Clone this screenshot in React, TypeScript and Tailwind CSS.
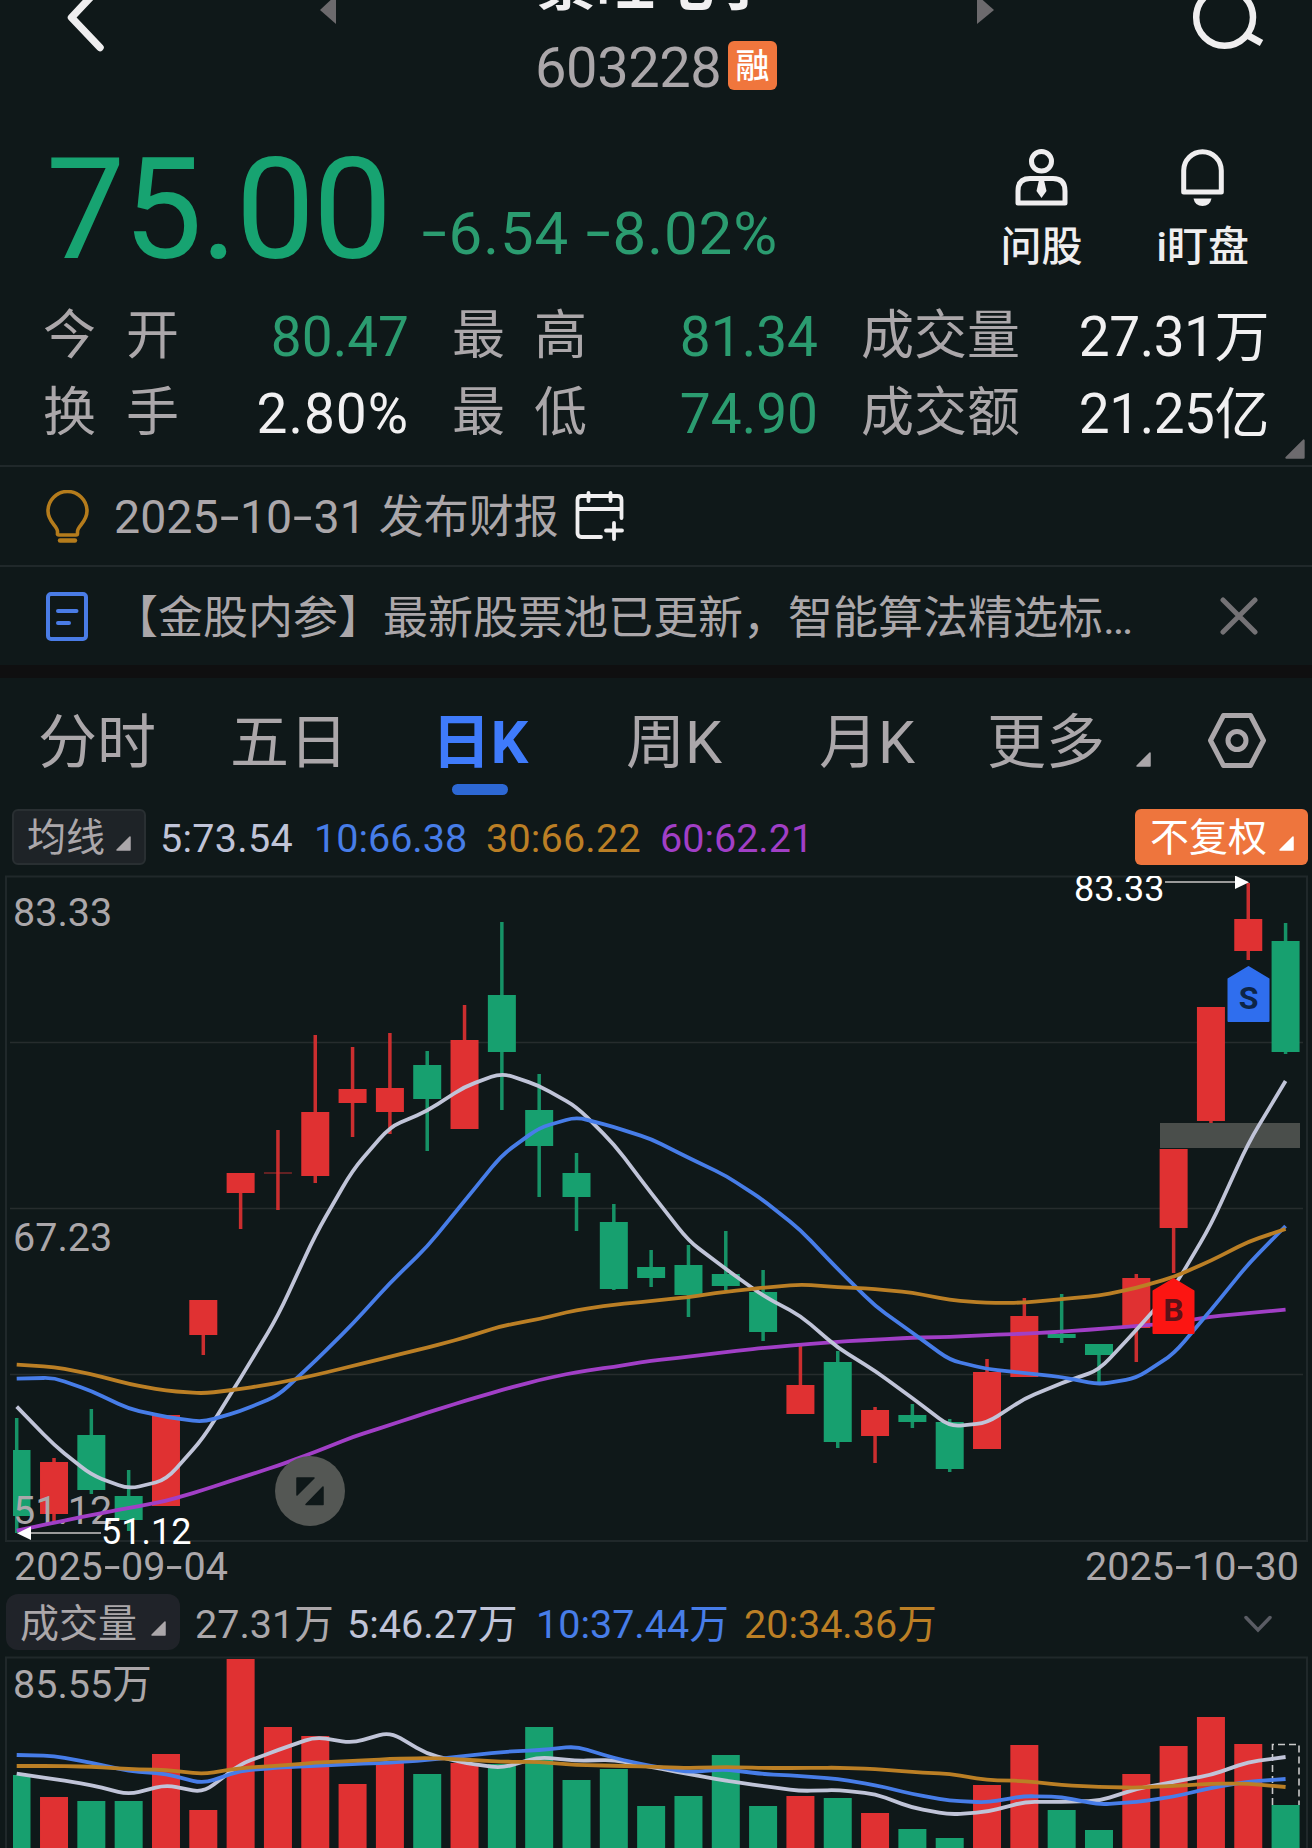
import type { ReactNode } from "react";

const UP = "#e03132";
const DOWN = "#17a06f";

// Horizontal centre of the n-th trading day
const cx = (i: number) => 16.7 + i * 37.32;

// [direction, body top, body bottom, wick top, wick bottom]
type Candle = [number, number, number, number, number];

const candles: Candle[] = [
  [0, 1450, 1516, 1418, 1533],
  [1, 1462, 1514, 1458, 1522],
  [0, 1435, 1490, 1409, 1494],
  [0, 1496, 1520, 1470, 1531],
  [1, 1415, 1506, 1415, 1506],
  [1, 1300, 1335, 1300, 1355],
  [1, 1173, 1193, 1173, 1229],
  [1, 1172, 1174, 1130, 1210],
  [1, 1112, 1176, 1035, 1183],
  [1, 1089, 1103, 1047, 1137],
  [1, 1088, 1112, 1033, 1134],
  [0, 1065, 1099, 1051, 1151],
  [1, 1040, 1129, 1005, 1129],
  [0, 995, 1052, 922, 1110],
  [0, 1110, 1146, 1074, 1197],
  [0, 1173, 1197, 1153, 1231],
  [0, 1222, 1289, 1204, 1290],
  [0, 1267, 1278, 1250, 1287],
  [0, 1265, 1295, 1245, 1317],
  [0, 1274, 1286, 1231, 1290],
  [0, 1292, 1332, 1270, 1341],
  [1, 1385, 1414, 1346, 1414],
  [0, 1362, 1442, 1351, 1448],
  [1, 1410, 1436, 1407, 1463],
  [0, 1415, 1422, 1404, 1428],
  [0, 1422, 1469, 1419, 1472],
  [1, 1372, 1449, 1359, 1449],
  [1, 1316, 1377, 1298, 1377],
  [0, 1334, 1338, 1294, 1343],
  [0, 1344, 1355, 1344, 1383],
  [1, 1278, 1328, 1274, 1362],
  [1, 1149, 1228, 1149, 1273],
  [1, 1007, 1121, 1007, 1124],
  [1, 919, 951, 883, 960],
  [0, 941, 1052, 923, 1054],
];

const priceLines = [
  {
    color: "#a13fc6",
    ys: [1530.7, 1522.7, 1515, 1508, 1501, 1490, 1477.7, 1465.7, 1452, 1437, 1425, 1412.7, 1401, 1390, 1380, 1372, 1366.7, 1360.7, 1356.7, 1352, 1348, 1344.7, 1341.7, 1339.7, 1337.7, 1337, 1335, 1333.7, 1331.7, 1329, 1326, 1323, 1316.7, 1313, 1309.7],
  },
  {
    color: "#c0c4d8",
    ys: [1406.7, 1445, 1475, 1489, 1480, 1438, 1378, 1316, 1235, 1170, 1127, 1111, 1086.7, 1073, 1085.7, 1106.7, 1144, 1193, 1240.7, 1269, 1295.7, 1315.7, 1347.7, 1371, 1398, 1426.5, 1423, 1398.7, 1383, 1370, 1330, 1288, 1225, 1143, 1081],
  },
  {
    color: "#477de8",
    ys: [1378.7, 1377.7, 1391, 1408.7, 1417, 1422, 1411, 1395.7, 1361, 1324, 1283, 1246.7, 1201, 1155, 1127.7, 1117, 1127, 1139, 1157.7, 1175.7, 1200, 1230, 1269, 1306, 1332.7, 1360, 1369, 1373, 1377, 1384.5, 1378, 1354, 1310, 1264, 1226],
  },
  {
    color: "#bb7f25",
    ys: [1364.7, 1367, 1374, 1384, 1390.7, 1393.5, 1389, 1383, 1375, 1366, 1356.7, 1347.7, 1337.7, 1326, 1319, 1310, 1304.7, 1301, 1297, 1291.7, 1287.7, 1284.5, 1287, 1289, 1292.7, 1300, 1303, 1302.7, 1299, 1295.7, 1288, 1277, 1260.7, 1241.7, 1229],
  },
];

const volumeTops = [1775, 1797, 1801, 1801, 1754, 1810, 1659, 1727, 1736, 1784, 1763, 1774, 1763, 1764, 1727, 1780, 1769, 1806, 1796, 1755, 1806, 1796, 1798, 1813, 1829, 1838, 1785, 1745, 1810, 1830, 1774, 1746, 1717, 1744, 1805];

const volumeLines = [
  {
    color: "#c0c4d8",
    ys: [1773.7, 1779, 1785, 1794.5, 1785, 1792.5, 1764, 1750, 1737, 1743, 1732, 1754, 1763, 1768, 1757, 1760.7, 1760, 1767, 1774, 1780.7, 1786, 1791, 1790, 1794, 1807.7, 1814.5, 1812, 1802, 1801.7, 1801, 1789, 1781.7, 1775, 1762, 1757],
  },
  {
    color: "#477de8",
    ys: [1755, 1756, 1762.7, 1771, 1774, 1783.5, 1770.7, 1767.7, 1766, 1764, 1762.7, 1760, 1756, 1752, 1750, 1746.5, 1758, 1766, 1772, 1769.5, 1774, 1776, 1779, 1785, 1794, 1800.7, 1802.5, 1796, 1797, 1804.5, 1802, 1796.7, 1788, 1781.7, 1779],
  },
  {
    color: "#bb7f25",
    ys: [1766, 1766, 1766.7, 1769, 1770, 1774, 1768, 1765.7, 1762.7, 1761, 1759, 1758, 1759.7, 1761.7, 1762, 1765, 1765.7, 1766.7, 1768, 1767, 1768, 1768, 1767.7, 1769, 1772, 1774, 1780, 1781, 1785, 1787, 1787.7, 1786, 1783.7, 1783.7, 1787],
  },
];

// Joins the points with straight segments and slightly rounded corners
function linePath(ys: number[]) {
  const r = 0.28;
  let d = `M${cx(0)} ${ys[0]}`;
  for (let i = 1; i < ys.length - 1; i++) {
    const x = cx(i);
    const y = ys[i];
    const x1 = x + (cx(i - 1) - x) * r;
    const y1 = y + (ys[i - 1] - y) * r;
    const x2 = x + (cx(i + 1) - x) * r;
    const y2 = y + (ys[i + 1] - y) * r;
    d += `L${x1} ${y1}Q${x} ${y} ${x2} ${y2}`;
  }
  return d + `L${cx(ys.length - 1)} ${ys[ys.length - 1]}`;
}

function Dash() {
  return (
    <span className="inline-block w-[0.46em] -translate-y-[0.03em] scale-x-150 text-center">-</span>
  );
}

function Corner({ className = "", size = 15 }: { className?: string; size?: number }) {
  return (
    <svg width={size} height={size} viewBox="0 0 15 15" className={className}>
      <path d="M14 1v13H1z" fill="currentColor" stroke="currentColor" strokeWidth="1.5" strokeLinejoin="round" />
    </svg>
  );
}

function Header() {
  return (
    <header className="flex h-[110px] items-start overflow-hidden">
      <svg width="50" height="60" viewBox="60 0 50 60" fill="none" className="ml-[60px]">
        <path d="M103 -16L71.5 17.5L100 47.5" stroke="#efeeef" strokeWidth="7.5" strokeLinecap="round" strokeLinejoin="round" />
      </svg>
      <svg width="16" height="24" viewBox="0 0 16 24" className="ml-[210px]">
        <path d="M16 -5v29L0 10z" fill="#6c6a6d" />
      </svg>
      <div className="ml-[197px] w-[244px]">
        <h1 className="-mt-[45px] pl-[4px] text-[59px] leading-[60px] font-bold whitespace-nowrap text-[#f1f0f1]">
          景旺电子
        </h1>
        <div className="mt-[28px] flex h-[50px] items-center whitespace-nowrap">
          <span className="w-[195px] pl-[2px] text-[56px] leading-[50px] tracking-[-0.4px] text-[#aba7aa]">603228</span>
          <span className="-mt-[5px] flex size-[49px] items-center justify-center rounded-md bg-[#f0763d] text-[34px] leading-[46px] font-medium text-white">
            融
          </span>
        </div>
      </div>
      <svg width="17" height="24" viewBox="0 0 17 24" className="ml-[200px]">
        <path d="M0 -5v29L17 10z" fill="#6c6a6d" />
      </svg>
      <svg width="76" height="56" viewBox="1190 0 76 56" fill="none" className="ml-[196px]" stroke="#efeeef" strokeWidth="6.5">
        <circle cx="1224.6" cy="17.3" r="28.4" />
        <path d="M1247 35L1261.500 43" strokeWidth="7" />
      </svg>
    </header>
  );
}

function Price() {
  return (
    <section className="flex h-[180px] items-start whitespace-nowrap">
      <div className="mt-[30px] ml-[46px] w-[354px] text-[141px] leading-[140px] tracking-[-2px] text-[#17a371]">75.00</div>
      <div className="mt-[94px] ml-[21px] text-[60px] leading-[60px] tracking-[0.9px] text-[#2b9c70]">
        <Dash />
        6.54 <Dash />
        8.02%
      </div>
      <div className="mt-[39px] mr-[63px] ml-auto flex gap-[74px] text-[41px] leading-[40px] font-medium text-[#efeeef]">
        <div className="flex flex-col items-center">
          <svg width="53" height="57" viewBox="0 0 53 57" fill="none" stroke="currentColor" strokeWidth="5">
            <ellipse cx="26.5" cy="12.3" rx="10" ry="9.8" />
            <path d="M3 54V42Q3 29.5 15 29.5H38Q50 29.5 50 42V54Z" strokeLinejoin="round" />
            <path d="M24 31h5l2.5 11l-5 7l-5 -7z" fill="currentColor" stroke="none" />
          </svg>
          <span className="mt-[21px]">问股</span>
        </div>
        <div className="flex flex-col items-center">
          <svg width="43" height="57" viewBox="0 0 43 57" fill="none" stroke="currentColor" strokeWidth="5">
            <path d="M2.7 43V21.5A18.8 18.8 0 0 1 40.3 21.5V43Z" strokeLinejoin="round" />
            <path d="M12.5 49.5h18q-1.5 7.5 -9 7.5t-9 -7.5z" fill="currentColor" stroke="none" />
          </svg>
          <span className="mt-[21px]">i盯盘</span>
        </div>
      </div>
    </section>
  );
}

const stats = [
  [
    { label: "今开", value: "80.47", tone: "text-[#2b9c70]" },
    { label: "最高", value: "81.34", tone: "text-[#2b9c70]" },
    { label: "成交量", value: "27.31万", tone: "tracking-[-0.5px] text-[#f1f0f1]" },
  ],
  [
    { label: "换手", value: "2.80%", tone: "tracking-[1px] text-[#f1f0f1]" },
    { label: "最低", value: "74.90", tone: "text-[#2b9c70]" },
    { label: "成交额", value: "21.25亿", tone: "tracking-[-0.5px] text-[#f1f0f1]" },
  ],
];

const labelWidths = ["w-[136px]", "w-[135px]", "w-[159px]"];
const valueWidths = ["w-[230px] mr-px", "w-[231px] mr-px", "w-[249px]"];

function Stats() {
  return (
    <section className="relative h-[177px] border-b-2 border-[#20282a] pt-[8px] pl-[43px] whitespace-nowrap">
      {stats.map((row, r) => (
        <div key={r} className="flex h-[77px] gap-[42px] leading-[77px]">
          {row.map((item, i) => (
            <div key={item.label} className="flex">
              <div className={`flex justify-between text-[53px] text-[#aba7aa] ${labelWidths[i]}`}>
                {item.label.split("").map((c) => (
                  <span key={c}>{c}</span>
                ))}
              </div>
              <div className={`pt-px text-right text-[55px] ${valueWidths[i]} ${item.tone}`}>{item.value}</div>
            </div>
          ))}
        </div>
      ))}
      <Corner size={20} className="absolute right-[7px] bottom-[6px] text-[#6d6b6e]" />
    </section>
  );
}

function Notices() {
  return (
    <section className="whitespace-nowrap text-[#aba7aa]">
      <div className="flex h-[100px] items-center border-b-2 border-[#20282a] pl-[46px]">
        <svg width="43" height="53" viewBox="0 0 43 53" fill="none" stroke="#b57c1c" strokeWidth="3.6">
          <path d="M11.5 45V41.5C11.5 36 2 32 2 21A19.5 19.5 0 0 1 41 21C41 32 31.5 36 31.5 41.5V43.5Q31.5 45 30 45H13Q11.5 45 11.5 43.5Z" />
          <path d="M14 50.5H29" strokeWidth="4.4" strokeLinecap="round" />
        </svg>
        <div className="mt-[2px] ml-[25px] text-[46.5px] leading-[60px]">
          2025
          <Dash />
          10
          <Dash />
          31
        </div>
        <div className="mt-[3px] ml-[13px] text-[45px] leading-[60px]">发布财报</div>
        <svg width="49" height="50" viewBox="0 0 49 50" fill="none" stroke="#f0eff0" strokeWidth="3.8" strokeLinecap="round" className="ml-[16px]">
          <path d="M26 46H6.5Q2.500 46 2.500 42V9Q2.500 5 6.5 5H42.5Q46.5 5 46.5 9V27M2.500 18H46.5M13.5 1.900V10M35.5 1.900V10" />
          <path d="M39 32V48M31 39.5H47" />
        </svg>
      </div>
      <div className="flex h-[98px] items-center pl-[46px]">
        <svg width="42" height="49" viewBox="0 0 42 49" fill="none" stroke="#4a7ce6" strokeWidth="4">
          <rect x="2" y="2" width="38" height="45" rx="3" />
          <path d="M12 19H30.5M12 31H23" strokeLinecap="round" />
        </svg>
        <div className="mt-[6px] ml-[25px] text-[45px] leading-[60px]">
          【金股内参】最新股票池已更新，智能算法精选标…
        </div>
        <svg width="38" height="38" viewBox="0 0 38 38" className="mr-[54px] ml-auto" stroke="#747275" strokeWidth="5" strokeLinecap="round">
          <path d="M3 3L35 35M35 3L3 35" />
        </svg>
      </div>
      <div className="h-[13px] bg-[#0f0f10]" />
    </section>
  );
}

const tabs = [
  { name: "分时", width: "w-[192px]" },
  { name: "五日", width: "w-[200px]" },
  { name: "日K", width: "w-[196px]", active: true },
  { name: "周K", width: "w-[193px]" },
  { name: "月K", width: "w-[168px]" },
  { name: "更多", width: "w-[149px]" },
];

function Tabs() {
  return (
    <nav className="flex h-[122px] items-start pt-[35px] pl-[38px] text-[59px] leading-[60px] whitespace-nowrap text-[#aba7aa]">
      {tabs.map((tab) => (
        <div key={tab.name} className={tab.width}>
          {tab.active ? (
            <div className="flex w-[100px] flex-col items-center font-bold text-[#3f7bfb]">
              {tab.name}
              <span className="mt-[11px] h-[11px] w-[56px] rounded-full bg-[#2d68d4]" />
            </div>
          ) : (
            tab.name
          )}
        </div>
      ))}
      <Corner className="mt-[39px]" />
      <svg width="60" height="56" viewBox="0 1 60 56" fill="none" stroke="currentColor" strokeWidth="5" className="ml-[56px]">
        <path d="M16.5 3.500H43.5L56.5 28.5L43.5 53.5H16.5L3.500 28.5Z" strokeLinejoin="round" />
        <circle cx="30" cy="28.5" r="9" />
      </svg>
    </nav>
  );
}

function Averages() {
  return (
    <div className="flex h-[70px] items-start pt-[9px] text-[39.5px] leading-[60px] whitespace-nowrap">
      <div className="ml-[12px] flex h-[56px] w-[134px] items-start rounded-md border-2 border-[#292f32] bg-[#1e2327] pl-[13px] text-[39px] leading-[55px] text-[#aba7aa]">
        均线
        <Corner className="mt-[25px] ml-[11px]" />
      </div>
      <span className="ml-[14px] w-[154px] tracking-[0.3px] text-[#c0c4d8]">5:73.54</span>
      <span className="w-[172px] text-[#477de8]">10:66.38</span>
      <span className="w-[174px] tracking-[0.2px] text-[#bb7f25]">30:66.22</span>
      <span className="text-[#a13fc6]">60:62.21</span>
      <div className="mr-[4px] ml-auto flex h-[56px] w-[173px] items-start rounded-md bg-[#ee753d] pl-[15px] text-[39px] leading-[58px] text-white">
        不复权
        <Corner className="mt-[27px] ml-[12px]" />
      </div>
    </div>
  );
}

function Marker({ x, y, fill, ink, children }: { x: number; y: number; fill: string; ink: string; children: ReactNode }) {
  return (
    <g>
      <path
        d={`M${x} ${y}L${x + 20} ${y + 12}V${y + 54}H${x - 20}V${y + 12}Z`}
        fill={fill}
        stroke={fill}
        strokeWidth="2"
        strokeLinejoin="round"
      />
      <text x={x} y={y + 42} textAnchor="middle" fontSize="32" fontWeight="700" fill={ink}>
        {children}
      </text>
    </g>
  );
}

function PriceChart() {
  return (
    <svg width="1312" height="680" viewBox="0 870 1312 680" className="block" fill="none">
      <rect x="6" y="876.5" width="1301" height="664.5" stroke="#20282a" strokeWidth="2" />
      <path d="M10 1042.5H1303M10 1208.5H1303M10 1374.5H1303" stroke="#262c2d" strokeWidth="1.5" />

      {candles.map(([up, top, bottom, high, low], i) => {
        const color = up ? UP : DOWN;
        const x = i === 0 ? 13 : cx(i) - 14;
        const w = i === 0 ? 17.5 : 28;
        return (
          <g key={i} fill={color}>
            <rect x={cx(i) - 1.75} y={high} width="3.5" height={low - high} opacity="0.9" />
            <rect x={x} y={top} width={w} height={bottom - top} opacity={bottom - top < 3 ? 0.4 : 1} />
          </g>
        );
      })}

      <rect x="1160" y="1123" width="140" height="25" fill="#4a4e4b" />

      <g fontSize="39.5" fill="#aba7aa">
        <text x="13" y="926">83.33</text>
        <text x="13" y="1250.5">67.23</text>
        <text x="13" y="1524">51.12</text>
      </g>

      {priceLines.map((line) => (
        <path key={line.color} d={linePath(line.ys)} stroke={line.color} strokeWidth="3.8" strokeLinejoin="round" />
      ))}

      {/* Highest and lowest price callouts */}
      <clipPath id="plot">
        <rect x="0" y="876" width="1312" height="680" />
      </clipPath>
      <g clipPath="url(#plot)" fill="#fff">
        <text x="1074" y="901" fontSize="36">83.33</text>
        <path d="M1165 882H1236" stroke="#9a9a9a" strokeWidth="2" />
        <path d="M1235 875.5V889L1249 882.3Z" />
        <text x="101" y="1544" fontSize="36">51.12</text>
        <path d="M30 1533H101" stroke="#9a9a9a" strokeWidth="2" />
        <path d="M31 1526.5V1540L17 1533.3Z" />
      </g>

      <Marker x={1248.5} y={967} fill="#2f6eee" ink="#0d2547">S</Marker>
      <Marker x={1173.5} y={1279} fill="#fc1512" ink="#5a1218">B</Marker>

      <circle cx="310" cy="1491" r="35" fill="#545754" />
      <path d="M297 1478H314L297 1495ZM323 1487V1504.5H306Z" fill="#0f1819" stroke="#0f1819" strokeWidth="1.5" strokeLinejoin="round" />
    </svg>
  );
}

function VolumeBar() {
  return (
    <div className="flex h-[70px] items-start pt-[10px] text-[39.5px] leading-[62px] whitespace-nowrap">
      <div className="ml-[6px] flex h-[56px] w-[174px] items-start rounded-xl bg-[#202329] pl-[14px] text-[39px] leading-[61px] text-[#aba7aa]">
        成交量
        <Corner className="mt-[27px] ml-[14px]" />
      </div>
      <span className="ml-[15px] w-[152px] text-[#aba7aa]">27.31万</span>
      <span className="w-[189px] text-[#c0c4d8]">5:46.27万</span>
      <span className="w-[208px] text-[#477de8]">10:37.44万</span>
      <span className="text-[#bb7f25]">20:34.36万</span>
      <svg width="28" height="18" viewBox="0 0 28 18" fill="none" stroke="#5a5c64" strokeWidth="3.5" strokeLinecap="round" className="mt-[21px] mr-[40px] ml-auto">
        <path d="M2 2.5L14 15L26 2.5" />
      </svg>
    </div>
  );
}

function VolumeChart() {
  return (
    <svg width="1312" height="194" viewBox="0 1654 1312 194" className="block" fill="none">
      <path d="M6 1850V1657.5H1307V1850" stroke="#20282a" strokeWidth="2" />
      <text x="13" y="1698" fontSize="39.5" fill="#aba7aa">85.55万</text>
      {volumeTops.map((top, i) => (
        <rect
          key={i}
          x={i === 0 ? 13 : cx(i) - 14}
          y={top}
          width={i === 0 ? 17.5 : 28}
          height={1850 - top}
          fill={candles[i][0] ? UP : DOWN}
        />
      ))}
      <path d="M1272.5 1805V1744.5H1299V1805" stroke="#c9c9c9" strokeWidth="1.6" strokeDasharray="7 4" />
      {volumeLines.map((line) => (
        <path key={line.color} d={linePath(line.ys)} stroke={line.color} strokeWidth="3.8" strokeLinejoin="round" />
      ))}
    </svg>
  );
}

export default function App() {
  return (
    <main className="h-[1848px] w-[1312px] overflow-hidden bg-[#0f1819] font-[Roboto,'Noto_Sans_CJK_SC',sans-serif]">
      <Header />
      <Price />
      <Stats />
      <Notices />
      <Tabs />
      <Averages />
      <PriceChart />
      <div className="flex h-[34px] justify-between pr-[13px] pl-[14px] text-[39.5px] leading-[34px] whitespace-nowrap text-[#aba7aa]">
        <span>
          2025
          <Dash />
          09
          <Dash />
          04
        </span>
        <span>
          2025
          <Dash />
          10
          <Dash />
          30
        </span>
      </div>
      <VolumeBar />
      <VolumeChart />
    </main>
  );
}
